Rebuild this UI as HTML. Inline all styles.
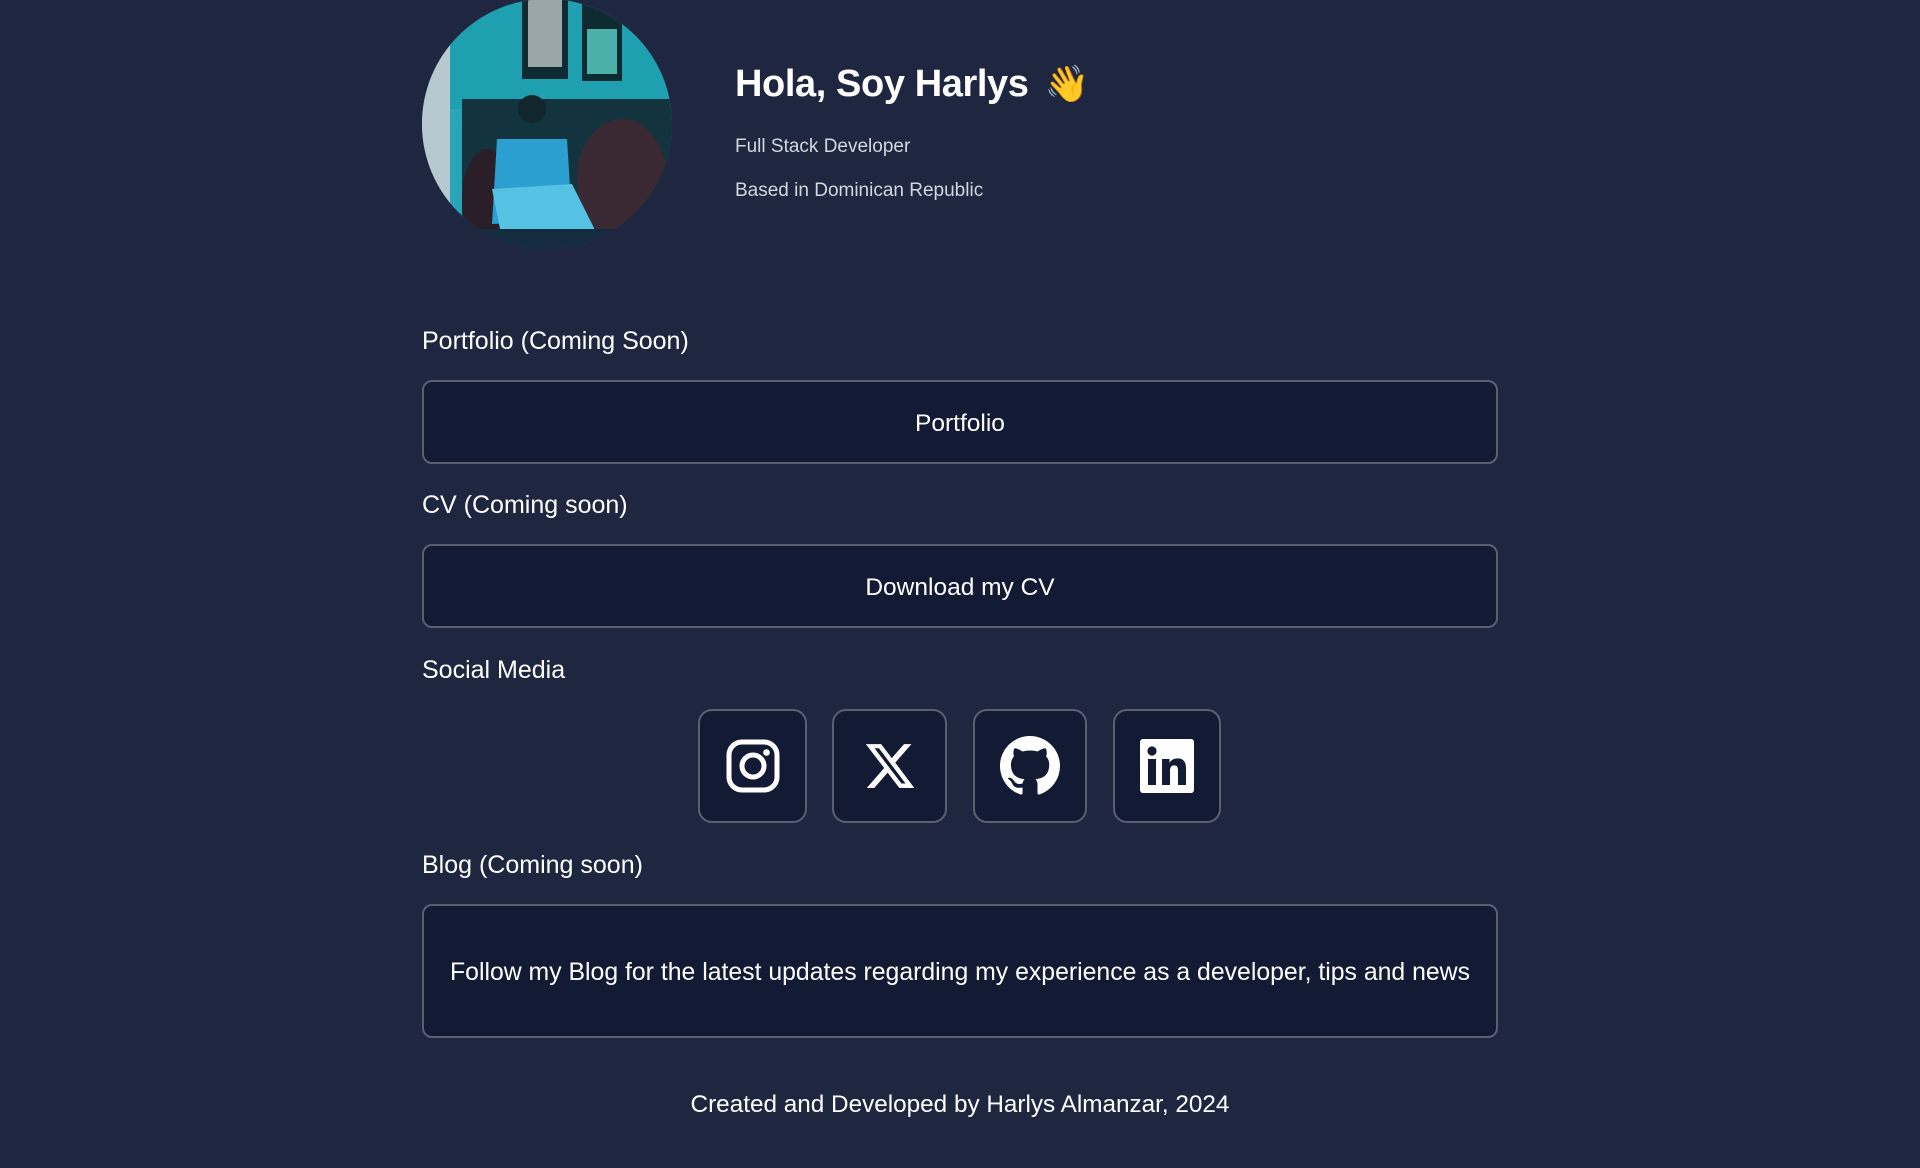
<!DOCTYPE html>
<html><head><meta charset="utf-8"><style>
*{margin:0;padding:0;box-sizing:border-box}
body{width:1920px;height:1168px;background:#1f2740;font-family:"Liberation Sans",sans-serif;color:#fff;position:relative;overflow:hidden}
.a{position:absolute}
.avatar{left:422px;top:-1px;width:250px;height:250px;border-radius:50%;overflow:hidden;background:linear-gradient(90deg,#9fb8c0 0,#2aa6b8 12%,#1c8fa0 50%,#157584 100%)}
.box{position:absolute;left:422px;width:1076px;background:#131a33;border:2px solid #5b5f6f;border-radius:10px;display:flex;align-items:center;justify-content:center;font-size:24.5px;padding-top:3px}
.lbl{position:absolute;left:422px;font-size:25px;line-height:28px}
.ic{position:absolute;top:709px;height:114px;background:#131a33;border:2px solid #5b5f6f;border-radius:14px;display:flex;align-items:center;justify-content:center}
</style></head><body>
<div class="a avatar">
 <svg width="250" height="250">
  <rect x="0" y="0" width="250" height="110" fill="#1fa0b0"/>
  <rect x="0" y="0" width="28" height="250" fill="#b7c9cf"/>
  <rect x="100" y="0" width="46" height="80" fill="#0e2a33"/>
  <rect x="106" y="0" width="34" height="68" fill="#9aa7a8"/>
  <rect x="160" y="0" width="40" height="82" fill="#0e2a33"/>
  <rect x="165" y="30" width="30" height="45" fill="#4ab0a8"/>
  <rect x="40" y="100" width="210" height="150" fill="#13333f"/>
  <ellipse cx="200" cy="180" rx="45" ry="60" fill="#3a2833"/>
  <ellipse cx="65" cy="200" rx="25" ry="50" fill="#2a1e28"/>
  <circle cx="110" cy="110" r="14" fill="#12262e"/>
  <path d="M75 140 L145 140 L150 220 L70 225Z" fill="#2b9fd0"/>
  <path d="M70 190 L150 185 L175 235 L80 240Z" fill="#56c2e3"/>
  <rect x="40" y="230" width="210" height="20" fill="#152b40"/>
 </svg>
</div>
<div class="a" style="left:735px;top:60px;font-size:38px;font-weight:bold;line-height:48px;letter-spacing:-0.4px">Hola, Soy Harlys <span style="font-family:'Noto Color Emoji','DejaVu Sans',sans-serif;font-size:36px;color:#f5c33b;margin-left:6px">👋</span></div>
<div class="a" style="left:735px;top:136px;font-size:19px;color:#d3d6de">Full Stack Developer</div>
<div class="a" style="left:735px;top:180px;font-size:19px;color:#d3d6de">Based in Dominican Republic</div>
<div class="lbl" style="top:327px">Portfolio (Coming Soon)</div>
<div class="box" style="top:380px;height:84px">Portfolio</div>
<div class="lbl" style="top:491px">CV (Coming soon)</div>
<div class="box" style="top:544px;height:84px">Download my CV</div>
<div class="lbl" style="top:656px">Social Media</div>
<div class="ic" style="left:698px;width:109px"><svg width="56" height="56" viewBox="0 0 56 56"><rect x="4" y="4" width="48" height="48" rx="13" fill="none" stroke="#fff" stroke-width="5"/><circle cx="28" cy="28" r="11" fill="none" stroke="#fff" stroke-width="5"/><circle cx="41.5" cy="14.5" r="3.3" fill="#fff"/></svg></div>
<div class="ic" style="left:832px;width:115px"><svg width="56" height="54" viewBox="0 0 24 24"><path fill="#fff" d="M18.24 2.25h3.31l-7.23 8.26 8.5 11.24h-6.66l-5.21-6.82-5.970 6.82H1.68l7.73-8.84L1.25 2.25h6.830l4.71 6.23zm-1.16 17.52h1.83L7.08 4.13H5.12z"/></svg></div>
<div class="ic" style="left:973px;width:114px"><svg width="60" height="60" viewBox="0 0 16 16"><path fill="#fff" d="M8 0C3.58 0 0 3.58 0 8c0 3.54 2.29 6.53 5.47 7.590.4.07.55-.17.55-.38 0-.19-.01-.82-.01-1.49-2.01.37-2.53-.49-2.69-.94-.09-.23-.48-.94-.82-1.13-.28-.15-.68-.52-.01-.53.63-.01 1.08.58 1.23.82.72 1.21 1.87.87 2.33.66.07-.52.28-.87.51-1.07-1.780-.2-3.64-.89-3.64-3.95 0-.87.31-1.59.82-2.15-.08-.2-.36-1.020.08-2.12 0 0 .67-.21 2.2.82.64-.18 1.32-.27 2-.27s1.36.09 2 .27c1.53-1.04 2.2-.82 2.2-.82.44 1.1.16 1.92.08 2.12.51.56.82 1.27.82 2.15 0 3.07-1.87 3.75-3.65 3.95.29.25.54.73.54 1.48 0 1.07-.01 1.93-.01 2.2 0 .21.15.46.55.38A8.010 8.010 0 0016 8c0-4.42-3.58-8-8-8z"/></svg></div>
<div class="ic" style="left:1113px;width:108px"><svg width="54" height="54" viewBox="0 0 54 54"><rect x="0" y="0" width="54" height="54" rx="3" fill="#fff"/><rect x="8" y="20" width="8" height="26" fill="#131a33"/><circle cx="12" cy="12" r="4.6" fill="#131a33"/><path d="M22 20h7.5v4c1.4-2.6 4-4.6 8-4.6 6.5 0 8.5 4 8.5 10.5V46h-8V32c0-3.2-.6-5.6-3.8-5.6S30 28.8 30 32v14h-8z" fill="#131a33"/></svg></div>
<div class="lbl" style="top:851px">Blog (Coming soon)</div>
<div class="box" style="top:904px;height:134px;font-size:24.8px">Follow my Blog for the latest updates regarding my experience as a developer, tips and news</div>
<div class="a" style="left:0;width:1920px;top:1091px;text-align:center;font-size:24.3px">Created and Developed by Harlys Almanzar, 2024</div>
</body></html>
